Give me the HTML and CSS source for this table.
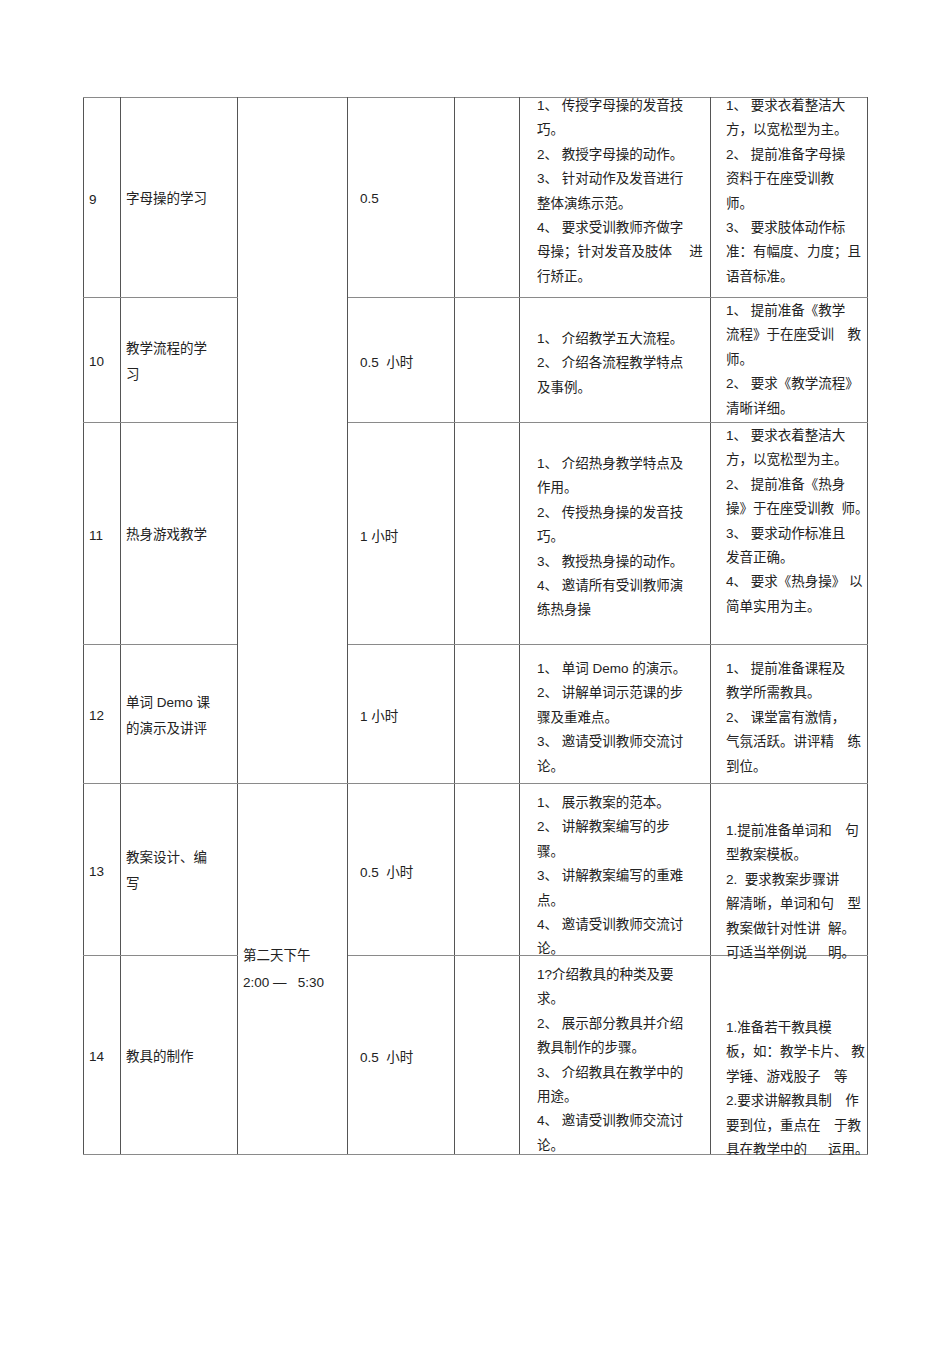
FILE: index.html
```html
<!DOCTYPE html>
<html lang="zh-CN">
<head>
<meta charset="utf-8">
<title>培训安排</title>
<link rel="stylesheet" href="styles.css">
</head>
<body>
<table class="plan">
  <colgroup>
    <col class="c-no"><col class="c-topic"><col class="c-time"><col class="c-dur"><col class="c-blank"><col class="c-content"><col class="c-req">
  </colgroup>
  <tbody>
    <tr class="r9">
      <td class="no">9</td>
      <td class="topic"><div class="ln">字母操的学习</div></td>
      <td class="time" rowspan="4"></td>
      <td class="dur"><div class="ln">0.5</div></td>
      <td class="blank"></td>
      <td class="content"><div class="txt off-n4">
        <div class="ln">1、 传授字母操的发音技</div>
        <div class="ln">巧。</div>
        <div class="ln">2、 教授字母操的动作。</div>
        <div class="ln">3、 针对动作及发音进行</div>
        <div class="ln">整体演练示范。</div>
        <div class="ln">4、 要求受训教师齐做字</div>
        <div class="ln">母操；针对发音及肢体　 进</div>
        <div class="ln">行矫正。</div>
      </div></td>
      <td class="req"><div class="txt off-n4">
        <div class="ln">1、 要求衣着整洁大</div>
        <div class="ln">方，以宽松型为主。</div>
        <div class="ln">2、 提前准备字母操</div>
        <div class="ln">资料于在座受训教</div>
        <div class="ln">师。</div>
        <div class="ln">3、 要求肢体动作标</div>
        <div class="ln">准：有幅度、力度；且</div>
        <div class="ln">语音标准。</div>
      </div></td>
    </tr>
    <tr class="r10">
      <td class="no">10</td>
      <td class="topic"><div class="ln">教学流程的学</div><div class="ln">习</div></td>
      <td class="dur"><div class="ln">0.5  小时</div></td>
      <td class="blank"></td>
      <td class="content"><div class="txt off-29">
        <div class="ln">1、 介绍教学五大流程。</div>
        <div class="ln">2、 介绍各流程教学特点</div>
        <div class="ln">及事例。</div>
      </div></td>
      <td class="req"><div class="txt off-1">
        <div class="ln">1、 提前准备《教学</div>
        <div class="ln">流程》于在座受训　教</div>
        <div class="ln">师。</div>
        <div class="ln">2、 要求《教学流程》</div>
        <div class="ln">清晰详细。</div>
      </div></td>
    </tr>
    <tr class="r11">
      <td class="no">11</td>
      <td class="topic"><div class="ln">热身游戏教学</div></td>
      <td class="dur"><div class="ln">1 小时</div></td>
      <td class="blank"></td>
      <td class="content"><div class="txt off-29">
        <div class="ln">1、 介绍热身教学特点及</div>
        <div class="ln">作用。</div>
        <div class="ln">2、 传授热身操的发音技</div>
        <div class="ln">巧。</div>
        <div class="ln">3、 教授热身操的动作。</div>
        <div class="ln">4、 邀请所有受训教师演</div>
        <div class="ln">练热身操</div>
      </div></td>
      <td class="req"><div class="txt off-1">
        <div class="ln">1、 要求衣着整洁大</div>
        <div class="ln">方，以宽松型为主。</div>
        <div class="ln">2、 提前准备《热身</div>
        <div class="ln">操》于在座受训教  师。</div>
        <div class="ln">3、 要求动作标准且</div>
        <div class="ln">发音正确。</div>
        <div class="ln">4、 要求《热身操》 以</div>
        <div class="ln">简单实用为主。</div>
      </div></td>
    </tr>
    <tr class="r12">
      <td class="no">12</td>
      <td class="topic"><div class="ln">单词 Demo 课</div><div class="ln">的演示及讲评</div></td>
      <td class="dur"><div class="ln">1 小时</div></td>
      <td class="blank"></td>
      <td class="content"><div class="txt off-12">
        <div class="ln">1、 单词 Demo 的演示。</div>
        <div class="ln">2、 讲解单词示范课的步</div>
        <div class="ln">骤及重难点。</div>
        <div class="ln">3、 邀请受训教师交流讨</div>
        <div class="ln">论。</div>
      </div></td>
      <td class="req"><div class="txt off-12">
        <div class="ln">1、 提前准备课程及</div>
        <div class="ln">教学所需教具。</div>
        <div class="ln">2、 课堂富有激情，</div>
        <div class="ln">气氛活跃。讲评精　练</div>
        <div class="ln">到位。</div>
      </div></td>
    </tr>
    <tr class="r13">
      <td class="no">13</td>
      <td class="topic"><div class="ln">教案设计、编</div><div class="ln">写</div></td>
      <td class="time" rowspan="2"><div class="ln">第二天下午</div><div class="ln">2:00 —   5:30</div></td>
      <td class="dur"><div class="ln">0.5  小时</div></td>
      <td class="blank"></td>
      <td class="content"><div class="txt off-7">
        <div class="ln">1、 展示教案的范本。</div>
        <div class="ln">2、 讲解教案编写的步</div>
        <div class="ln">骤。</div>
        <div class="ln">3、 讲解教案编写的重难</div>
        <div class="ln">点。</div>
        <div class="ln">4、 邀请受训教师交流讨</div>
        <div class="ln">论。</div>
      </div></td>
      <td class="req"><div class="txt off-35">
        <div class="ln">1.提前准备单词和　句</div>
        <div class="ln">型教案模板。</div>
        <div class="ln">2.  要求教案步骤讲</div>
        <div class="ln">解清晰，单词和句　型</div>
        <div class="ln">教案做针对性讲  解。</div>
        <div class="ln">可适当举例说　  明。</div>
      </div></td>
    </tr>
    <tr class="r14">
      <td class="no">14</td>
      <td class="topic"><div class="ln">教具的制作</div></td>
      <td class="dur"><div class="ln">0.5  小时</div></td>
      <td class="blank"></td>
      <td class="content"><div class="txt off-7">
        <div class="ln">1?介绍教具的种类及要</div>
        <div class="ln">求。</div>
        <div class="ln">2、 展示部分教具并介绍</div>
        <div class="ln">教具制作的步骤。</div>
        <div class="ln">3、 介绍教具在教学中的</div>
        <div class="ln">用途。</div>
        <div class="ln">4、 邀请受训教师交流讨</div>
        <div class="ln">论。</div>
      </div></td>
      <td class="req"><div class="txt off-60">
        <div class="ln">1.准备若干教具模</div>
        <div class="ln">板，如：教学卡片、 教</div>
        <div class="ln">学锤、游戏股子　等</div>
        <div class="ln">2.要求讲解教具制　作</div>
        <div class="ln">要到位，重点在　于教</div>
        <div class="ln">具在教学中的　  运用。</div>
      </div></td>
    </tr>
  </tbody>
</table>
</body>
</html>
```

FILE: styles.css
```css
html, body {
  margin: 0;
  padding: 0;
  background: #ffffff;
}

body {
  font-family: "Liberation Sans", "Noto Sans CJK SC", sans-serif;
  font-size: 13.5px;
  color: #222222;
}

.plan {
  border-collapse: collapse;
  table-layout: fixed;
  width: 784px;
  margin: 97px 0 0 83px;
}

.c-no { width: 37px; }
.c-topic { width: 117px; }
.c-time { width: 110px; }
.c-dur { width: 107px; }
.c-blank { width: 65px; }
.c-content { width: 191px; }
.c-req { width: 157px; }

.plan td {
  padding: 0;
  vertical-align: middle;
  border-left: 1px solid #555555;
  border-right: 1px solid #555555;
  border-top: 1px solid #8a8a8a;
  border-bottom: 1px solid #8a8a8a;
  overflow: visible;
}

.r9 { height: 200px; }
.r10 { height: 125px; }
.r11 { height: 222px; }
.r12 { height: 139px; }
.r13 { height: 172px; }
.r14 { height: 199px; }

.ln {
  white-space: pre;
}

.no {
  padding-left: 5px !important;
  padding-top: 3px !important;
}

.topic {
  padding-left: 5px !important;
  padding-top: 3px !important;
  line-height: 26px;
}

.time {
  padding-left: 5px !important;
  line-height: 27px;
}

.dur {
  padding-left: 12px !important;
  padding-top: 2px !important;
}

.content {
  padding-left: 17px !important;
  vertical-align: top !important;
}

.req {
  padding-left: 15px !important;
  vertical-align: top !important;
}

/* text blocks are placed from the cell top and may run past the cell bottom
   without stretching the row, as in the source document */
.txt {
  line-height: 24.4px;
  margin-bottom: -80px;
}

.off-n4 { margin-top: -4px; }
.off-1 { margin-top: 1px; }
.off-7 { margin-top: 7px; }
.off-12 { margin-top: 12px; }
.off-29 { margin-top: 29px; }
.off-35 { margin-top: 35px; }
.off-60 { margin-top: 60px; }
```
